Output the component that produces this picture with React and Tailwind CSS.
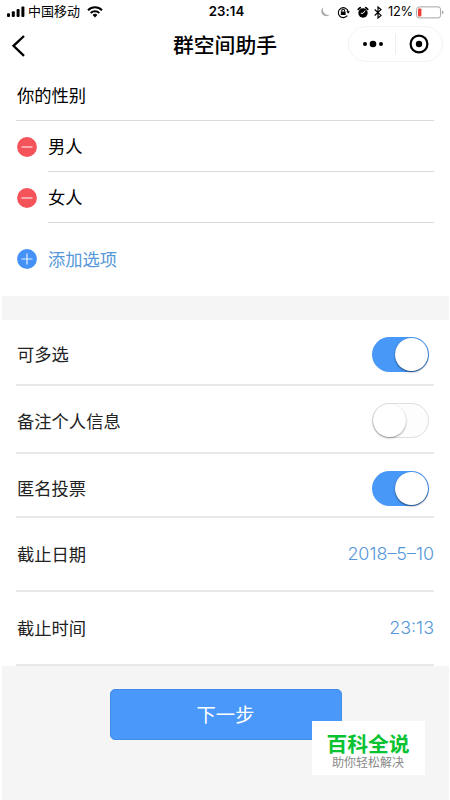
import React from 'react';

function StatusBar() {
  return (
    <div className="grid h-6 shrink-0 grid-cols-[1fr_auto_1fr] items-center pl-[7px] pr-[6px] text-black">
      <div className="flex items-center">
        <svg width="18" height="12" viewBox="0 0 18 12" className="mr-[3px]">
          <rect x="0" y="7.2" width="3" height="3.8" rx="1" />
          <rect x="4.8" y="5.2" width="3" height="5.8" rx="1" />
          <rect x="9.6" y="3" width="3" height="8" rx="1" />
          <rect x="14.4" y="0.5" width="3" height="10.5" rx="1" />
        </svg>
        <span className="-mt-[2px] text-[13px] leading-6">中国移动</span>
        <svg width="16" height="12" viewBox="0 0 16 12" className="-mt-px ml-[7px]" fill="none" stroke="#000" strokeWidth="2">
          <path d="M1 4.2a10 10 0 0 1 14 0" />
          <path d="M3.7 7a6.1 6.1 0 0 1 8.6 0" />
          <path d="M8 11.5 5.6 9a3.5 3.5 0 0 1 4.8 0z" fill="#000" stroke="none" />
        </svg>
      </div>
      <span className="-mt-[2px] ml-[2px] font-[Inter,sans-serif] text-[13.2px] font-semibold leading-6 tracking-[0.1px]">23:14</span>
      <div className="flex items-center justify-end">
        <svg width="11" height="12" viewBox="0 0 11 12" className="mr-[6px]">
          <path d="M3.5 1A5 5 0 1 0 10 8.5 5.3 5.3 0 0 1 3.5 1z" fill="#aaa" />
        </svg>
        <svg width="13" height="13" viewBox="0 0 13 13" className="mr-[7px]" fill="none" stroke="#000" strokeWidth="1.1">
          <path d="M10.3 9.7A5 5 0 1 1 11.2 5.5" />
          <path d="M9.4 5.3h3.5L11.2 7.8z" fill="#000" stroke="none" />
          <rect x="3.8" y="5.6" width="4.8" height="3.4" fill="#000" stroke="none" />
          <path d="M4.8 5.7V4.6a1.4 1.4 0 0 1 2.8 0v1.1" />
        </svg>
        <svg width="12" height="13" viewBox="0 0 12 13" className="mr-[5px]">
          <circle cx="6" cy="7" r="4.7" />
          <path d="M1.3 3.4 3.2 1.7M10.7 3.4 8.8 1.7" stroke="#000" strokeWidth="1.8" strokeLinecap="round" />
          <path d="M8.2 4.6 6 7.3H3.8" stroke="#fff" strokeWidth="1" fill="none" />
        </svg>
        <svg width="8" height="13" viewBox="0 0 8 13" className="mr-[6px]" fill="none" stroke="#000" strokeWidth="1.2">
          <path d="M.7 3.5 7 9.4 4 12V1l3 2.6L.7 9.5" />
        </svg>
        <span className="font-[Inter,sans-serif] text-[12.8px] leading-6 tracking-[-0.2px]">12%</span>
        <svg width="28" height="13" viewBox="0 0 28 13" className="ml-[3px]">
          <rect x=".6" y=".9" width="24" height="11" rx="2.5" fill="none" stroke="#a5a5a5" />
          <rect x="2" y="2.4" width="3.4" height="8" rx=".8" fill="#ee3e35" />
          <path d="M26 4.7q1.5.2 1.5 1.7T26 8.1z" fill="#a5a5a5" />
        </svg>
      </div>
    </div>
  );
}

function NavBar() {
  return (
    <div className="grid h-[46px] shrink-0 grid-cols-[1fr_auto_1fr] items-start pl-[11px] pr-[7px]">
      <svg width="14" height="22" viewBox="0 0 14 22" className="mt-[11px]" fill="none" stroke="#000" strokeWidth="2.3">
        <path d="M13 1 2.5 10.8 13 20.8" />
      </svg>
      <h1 className="-ml-[2px] mr-[2px] mt-[5px] text-[20.8px] font-medium leading-[30px] text-black">群空间助手</h1>
      <div className="mt-[2px] flex h-9 w-[95px] items-center justify-self-end rounded-full border border-[#f3f3f3]">
        <svg width="46" height="20" viewBox="0 0 46 20">
          <circle cx="16" cy="10" r="2" />
          <circle cx="24" cy="10" r="3.3" />
          <circle cx="32" cy="10" r="2" />
        </svg>
        <div className="h-5 w-px bg-[#eeeeee]" />
        <svg width="45" height="20" viewBox="0 0 45 20">
          <circle cx="23" cy="10" r="8.4" fill="none" stroke="#000" strokeWidth="2.2" />
          <circle cx="23" cy="10" r="3.2" />
        </svg>
      </div>
    </div>
  );
}

function RoundIcon({ plus }) {
  return (
    <svg width="20" height="20" viewBox="0 0 20 20" className="mr-[11px] shrink-0">
      <circle cx="10" cy="10" r="9.9" fill={plus ? '#4491f7' : '#f5535a'} />
      <path d={plus ? 'M4.5 10h11M10 4.5v11' : 'M4.5 10h11'} stroke="#fff" strokeOpacity=".85" strokeWidth="1.2" />
    </svg>
  );
}

function Option({ children }) {
  return (
    <div className="flex h-[51px] items-center pl-[16px] pr-[15px]">
      <RoundIcon />
      <div className="flex h-full grow items-center border-b border-[#dadada]">{children}</div>
    </div>
  );
}

function Toggle({ on }) {
  return (
    <div
      className={
        on
          ? 'mr-[5px] flex h-[35px] w-[57px] items-center justify-end rounded-full bg-[#4898f8] p-px'
          : 'mr-[5px] flex h-[35px] w-[57px] items-center rounded-full border border-[#dedede] bg-[#fdfdfd]'
      }
    >
      <div
        className={
          on
            ? 'h-[33px] w-[33px] rounded-full bg-white shadow-[0_1px_2px_rgba(0,0,0,0.55)]'
            : 'h-[33px] w-[33px] rounded-full bg-white shadow-[0_1px_2px_rgba(0,0,0,0.4)]'
        }
      />
    </div>
  );
}

function Setting({ label, height, children }) {
  return (
    <div className={`ml-[15px] mr-[15px] flex items-center justify-between border-b-2 border-[#e8e8e8] pl-px text-[#222] ${height}`}>
      <span>{label}</span>
      {children}
    </div>
  );
}

function Value({ children }) {
  return <span className="font-[Inter,sans-serif] text-[17.9px] font-light text-[#5597d8]">{children}</span>;
}

export default function App() {
  return (
    <div className="flex h-[800px] w-[450px] flex-col overflow-hidden bg-white font-['Noto_Sans_CJK_SC',sans-serif] text-[17.3px] leading-[26px] text-black">
      <StatusBar />
      <NavBar />
      <main className="ml-px mr-px flex grow flex-col">
        <div className="ml-[15px] mr-[15px] flex h-[51px] shrink-0 items-center border-b border-[#dadada] pl-px">你的性别</div>
        <Option>男人</Option>
        <Option>女人</Option>
        <div className="flex h-[73px] shrink-0 items-center pb-px pl-[16px] text-[#5597d8]">
          <RoundIcon plus />
          添加选项
        </div>
        <div className="ml-px h-6 shrink-0 bg-[#f5f5f5]" />
        <Setting label="可多选" height="h-[66px] pt-1">
          <Toggle on />
        </Setting>
        <Setting label="备注个人信息" height="h-[68px] pt-[3px]">
          <Toggle />
        </Setting>
        <Setting label="匿名投票" height="h-[64px] pt-[6px]">
          <Toggle on />
        </Setting>
        <Setting label="截止日期" height="h-[74px]">
          <Value>2018–5–10</Value>
        </Setting>
        <Setting label="截止时间" height="h-[74px]">
          <Value>23:13</Value>
        </Setting>
        <footer className="relative ml-px flex grow items-start justify-center bg-[#f5f5f5] pt-[23px]">
          <button className="h-[51px] w-[232px] rounded-[5px] border border-[#438ce5] bg-[#4b98fb] pb-[2px] text-[19.3px] text-white">下一步</button>
          <div className="absolute left-[310px] top-[55px] flex h-[54px] w-[113px] flex-col items-center bg-white pr-px">
            <strong className="mt-[10px] text-[20.8px] font-bold leading-[24px] text-[#08c232]">百科全说</strong>
            <span className="text-[12px] leading-[14px] text-[#888]">助你轻松解决</span>
          </div>
        </footer>
      </main>
    </div>
  );
}
